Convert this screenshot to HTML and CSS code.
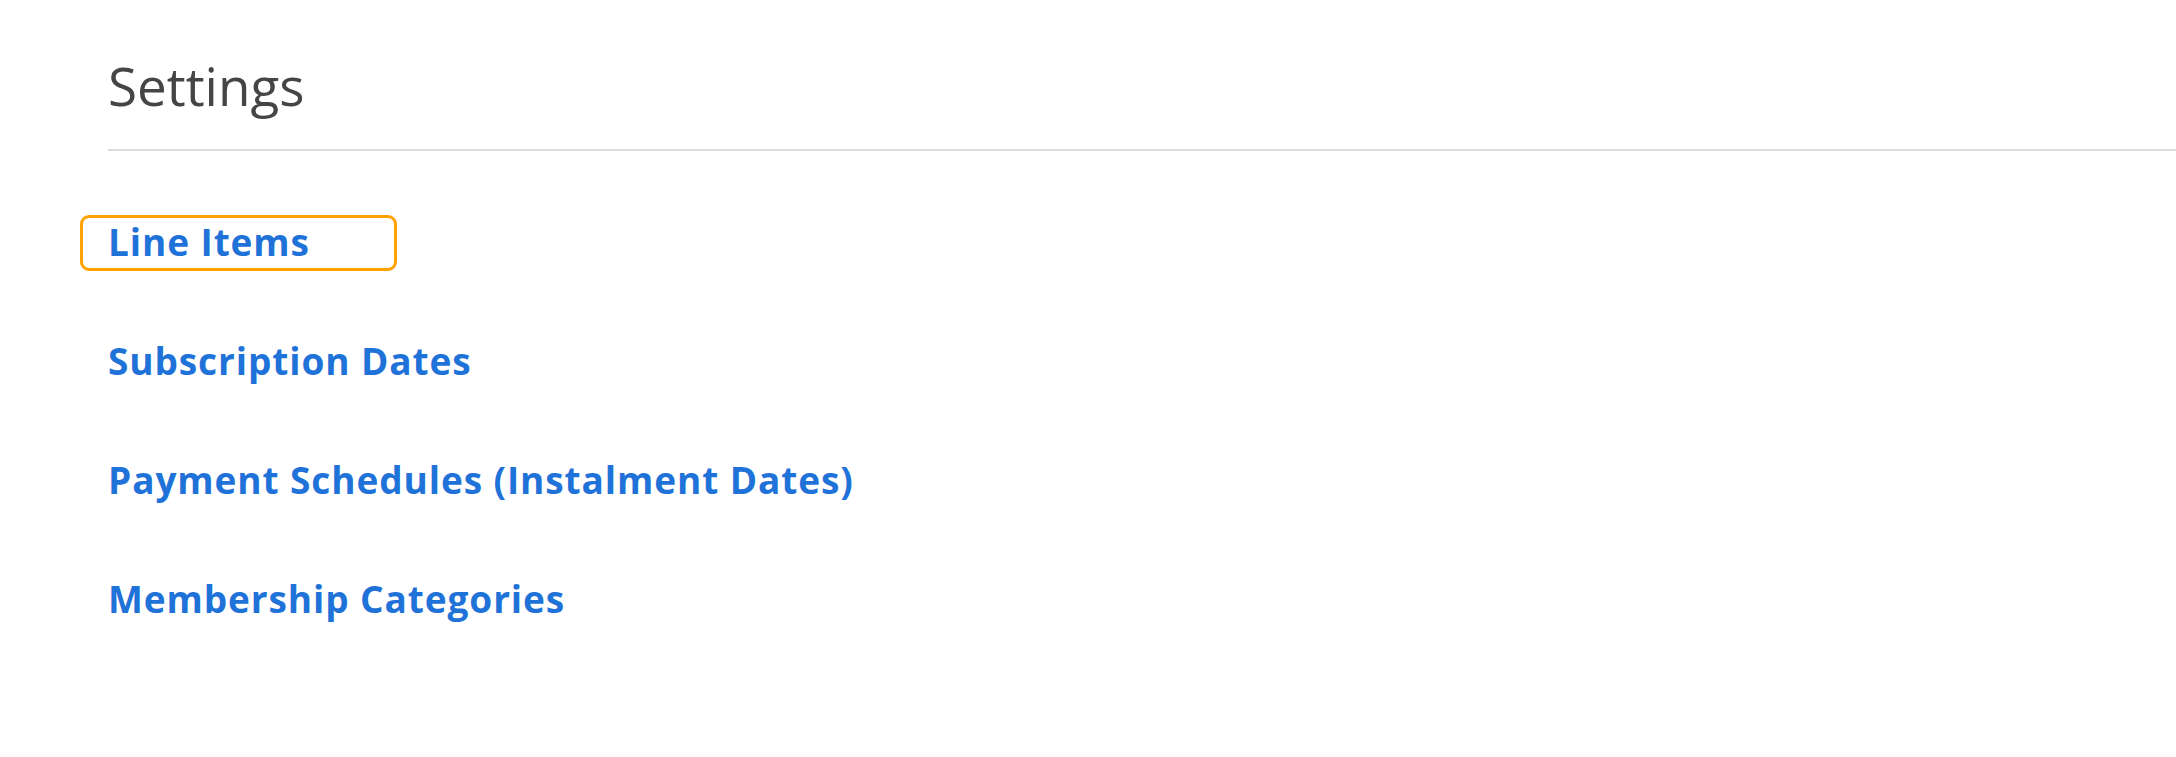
FILE: index.html
```html
<!DOCTYPE html>
<html>
<head>
<meta charset="utf-8">
<link rel="stylesheet" href="styles.css">
</head>
<body>
<div class="page">
  <h1 class="title">Settings</h1>
  <div class="rule"></div>
  <ul class="links">
    <li class="item focused"><a href="#">Line Items</a></li>
    <li class="item"><a href="#">Subscription Dates</a></li>
    <li class="item"><a href="#">Payment Schedules (Instalment Dates)</a></li>
    <li class="item"><a href="#">Membership Categories</a></li>
  </ul>
</div>
</body>
</html>
```
FILE: styles.css
```css
html, body {
  margin: 0;
  padding: 0;
  background: #ffffff;
}
.page {
  padding: 54px 0 0 108px;
  font-family: "Open Sans", "Liberation Sans", sans-serif;
}
.title {
  margin: 0;
  font-weight: 400;
  font-size: 53px;
  line-height: 64px;
  color: #454545;
}
.rule {
  margin-top: 31px;
  height: 2px;
  background: #dcdcdc;
}
.links {
  list-style: none;
  margin: 64px 0 0 0;
  padding: 0;
  display: flex;
  flex-direction: column;
  gap: 63px;
}
.item {
  height: 56px;
  box-sizing: border-box;
  padding-bottom: 3px;
  display: flex;
  align-items: center;
}
.item a {
  font-weight: 700;
  font-size: 37px;
  color: #1f72d8;
  text-decoration: none;
  letter-spacing: 0.9px;
}
.focused {
  margin-left: -28px;
  width: 317px;
  padding-left: 25px;
  border: 3px solid #ffa200;
  border-radius: 9px;
}
```
